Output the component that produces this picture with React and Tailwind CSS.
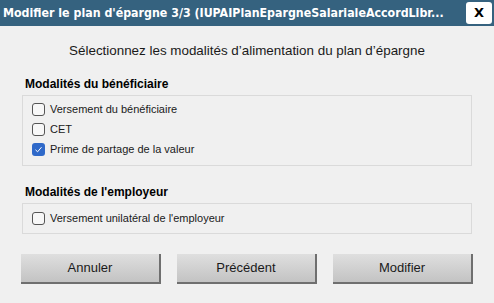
export default function App() {
  const font = { fontFamily: '"Liberation Sans", Arial, sans-serif' };
  return (
    <div className="w-[494px] h-[303px] bg-[#f0f0f0] overflow-hidden" style={font}>
      <div className="h-[26px] bg-[#35627f] flex items-center gap-[4px] pl-[3px] pr-[2px]">
        <span
          className="flex-1 min-w-0 overflow-hidden text-white font-bold text-[12.3px] whitespace-nowrap"
          style={{ fontFamily: '"DejaVu Sans Condensed", "DejaVu Sans", sans-serif' }}
        >
          Modifier le plan d'épargne 3/3 (IUPAIPlanEpargneSalarialeAccordLibr...
        </span>
        <button
          className="shrink-0 w-[26px] h-[22px] bg-white rounded-[3px] text-black font-bold text-[13px] flex items-center justify-center"
          style={{ fontFamily: '"DejaVu Sans", sans-serif' }}
        >
          X
        </button>
      </div>

      <p className="text-center text-[13.4px] leading-[21px] text-[#1a1a1a] mt-[14px]">
        Sélectionnez les modalités d’alimentation du plan d’épargne
      </p>

      <div className="px-[22px] mt-[16px]">
        <h2 className="font-bold text-[12px] text-black leading-[14px] pl-[3px]">Modalités du bénéficiaire</h2>
        <div className="mt-[4px] border border-[#dadada] h-[71px] pt-[7px] pl-[9px] flex flex-col gap-[7px]">
          <Check label="Versement du bénéficiaire" />
          <Check label="CET" />
          <Check label="Prime de partage de la valeur" checked />
        </div>

        <h2 className="font-bold text-[12px] text-black leading-[14px] pl-[3px] mt-[19px]">Modalités de l'employeur</h2>
        <div className="mt-[4px] border border-[#dadada] h-[31px] pt-[8px] pl-[9px]">
          <Check label="Versement unilatéral de l'employeur" />
        </div>
      </div>

      <div className="flex gap-[16px] px-[21px] mt-[20px]">
        <Btn label="Annuler" />
        <Btn label="Précédent" />
        <Btn label="Modifier" />
      </div>
    </div>
  );
}

function Check({ label, checked }) {
  return (
    <div className="flex items-center gap-[5px] h-[13px]">
      {checked ? (
        <span className="w-[13px] h-[13px] rounded-[3px] bg-[#2f69c9] flex items-center justify-center">
          <svg width="9" height="9" viewBox="0 0 9 9">
            <path d="M1.5 4.8 L3.6 6.8 L7.5 2.2" fill="none" stroke="white" strokeWidth="1" />
          </svg>
        </span>
      ) : (
        <span className="w-[13px] h-[13px] rounded-[3px] border border-[#555] bg-[#f7f7f7]" />
      )}
      <span className="text-[11px] text-[#1a1a1a] leading-[13px]">{label}</span>
    </div>
  );
}

function Btn({ label }) {
  return (
    <button className="w-[140px] h-[30px] bg-gradient-to-b from-[#dfdfdf] to-[#c3c3c3] border-r-2 border-b-2 border-[#6f6f6f] text-[13px] text-[#1a1a1a] flex items-center justify-center">
      {label}
    </button>
  );
}
